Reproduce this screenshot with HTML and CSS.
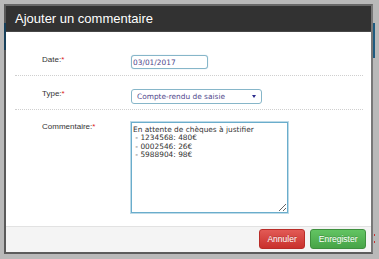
FILE: index.html
```html
<!DOCTYPE html>
<html lang="fr">
<head>
<meta charset="UTF-8">
<meta name="viewport" content="width=device-width, initial-scale=1.0">
<title>Ajouter un commentaire</title>
<link rel="stylesheet" href="styles.css">
</head>
<body>
    <div class="modal">
        <div class="modal-header">Ajouter un commentaire</div>

        <form class="modal-body" id="comment-form">
            <div class="form-row">
                <label for="comment-date">Date:<span class="req">*</span></label>
                <div class="field">
                    <input type="text" id="comment-date" class="input-date" value="03/01/2017">
                </div>
            </div>

            <div class="form-row">
                <label for="comment-type">Type:<span class="req">*</span></label>
                <div class="field">
                    <div class="select-wrap">
                        <select id="comment-type">
                            <option selected>Compte-rendu de saisie</option>
                            <option>Relance</option>
                            <option>Autre</option>
                        </select>
                    </div>
                </div>
            </div>

            <div class="form-row last">
                <label for="comment-text">Commentaire:<span class="req">*</span></label>
                <div class="field">
                    <textarea id="comment-text">En attente de chèques à justifier
 - 1234568: 480€
 - 0002546: 26€
 - 5988904: 98€</textarea>
                </div>
            </div>
        </form>

        <div class="modal-footer">
            <button type="button" class="btn btn-danger">Annuler</button>
            <button type="button" class="btn btn-success">Enregister</button>
        </div>
    </div>

    <!-- bits of the page behind the backdrop -->
    <div class="behind behind-left"></div>
    <div class="behind behind-right"></div>
    <div class="behind behind-dot dot-1"></div>
    <div class="behind behind-dot dot-2"></div>
</body>
</html>
```

FILE: styles.css
```css
html, body {
  height: 100%;
}
body {
  margin: 0;
  padding: 4px;
  background-color: #b9b9b9;
  font-family: "Liberation Sans", Arial, sans-serif;
  box-sizing: border-box;
  overflow: hidden;
  position: relative;
}
.modal {
  width: 365px;
  border: 2px solid;
  border-color: #686868 #787878 #5c5c5c #5a5a5a;
  background-color: #fff;
}
.modal-header {
  height: 26px;
  box-sizing: border-box;
  padding-left: 9px;
  display: flex;
  align-items: center;
  background-color: #323232;
  border-bottom: 1px solid #474747;
  color: #fff;
  font-size: 13px;
}
.modal-body {
  height: 194px;
  box-sizing: border-box;
  margin: 0;
  padding: 10px 8px 0 9px;
}
.form-row {
  display: grid;
  grid-template-columns: 116px 1fr;
  padding: 13px 0 5px;
  border-bottom: 1px dotted #cfcfcf;
}
.form-row.last {
  padding: 12px 0 0;
  border-bottom: none;
}
.form-row label {
  padding-left: 27px;
  font-size: 8px;
  line-height: 10px;
  color: #333;
}
.req {
  color: #e02020;
}
.field input,
.field select,
.field textarea {
  font-family: "DejaVu Sans", Verdana, sans-serif;
  font-size: 7.4px;
  box-sizing: border-box;
  outline: none;
}
.input-date {
  display: block;
  width: 77px;
  height: 14px;
  margin: 0 0 1px;
  padding: 0 1px;
  border: 1px solid #86b6c9;
  border-radius: 3px;
  box-shadow: 0 0 1px rgba(102, 160, 190, 0.6);
  color: #4f478c;
}
.select-wrap {
  position: relative;
  width: 131px;
}
.select-wrap select {
  display: block;
  width: 100%;
  height: 15px;
  padding: 0 0 0 5px;
  border: 1px solid #86b6c9;
  border-radius: 3px;
  background-color: #fff;
  color: #4f478c;
  -webkit-appearance: none;
  appearance: none;
}
.select-wrap::after {
  content: "";
  position: absolute;
  right: 6px;
  top: 6px;
  border-left: 2px solid transparent;
  border-right: 2px solid transparent;
  border-top: 3px solid #2a2a8c;
}
.field textarea {
  display: block;
  width: 157px;
  height: 91px;
  margin: 0;
  padding: 3px 1px 1px;
  border: 1px solid #6aadcc;
  box-shadow: 0 0 0 1px rgba(110, 175, 205, 0.45);
  line-height: 8.4px;
  color: #333;
  resize: vertical;
}
.modal-footer {
  height: 26px;
  box-sizing: border-box;
  padding: 2px 5px 0 0;
  display: flex;
  justify-content: flex-end;
  align-items: flex-start;
  gap: 5px;
  background-color: #f4f4f4;
  border-top: 1px solid #e2e2e2;
}
.btn {
  height: 20px;
  padding: 0 7.5px;
  border: 1px solid;
  border-radius: 3px;
  font-family: "Liberation Sans", Arial, sans-serif;
  font-size: 8.5px;
  color: #fff;
  text-shadow: 0 -1px 0 rgba(0, 0, 0, 0.2);
  cursor: pointer;
}
.btn-danger {
  background: linear-gradient(#e25a55, #c9302c);
  border-color: #b92c28;
}
.btn-success {
  background: linear-gradient(#62c462, #47a447);
  border-color: #3e8f3e;
}
.behind {
  position: absolute;
}
.behind-left {
  left: 4px;
  top: 23px;
  width: 2px;
  height: 27px;
  background-color: #17405a;
}
.behind-right {
  left: 373px;
  top: 23px;
  width: 2px;
  height: 35px;
  background-color: #1e5b80;
}
.behind-dot {
  left: 374px;
  width: 1px;
  height: 2px;
  background-color: #c83030;
}
.dot-1 {
  top: 234px;
}
.dot-2 {
  top: 241px;
}
```
